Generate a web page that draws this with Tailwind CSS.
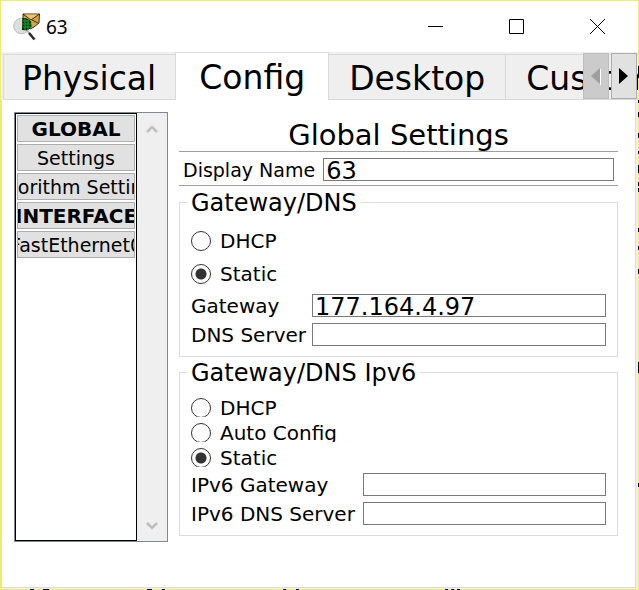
<!DOCTYPE html>
<html lang="en">
<head>
<meta charset="utf-8">
<meta name="viewport" content="width=device-width, initial-scale=1">
<title>63</title>
<script src="https://cdn.jsdelivr.net/npm/@tailwindcss/browser@4"></script>
</head>
<body class="relative min-h-screen flex flex-col overflow-hidden bg-[#f0ec72] p-px font-['DejaVu_Sans',Verdana,sans-serif] text-[19px] leading-5 text-black">
  <div class="flex grow flex-col bg-[#efefef]">
    <header class="flex h-[51px] items-center bg-white">
      <svg class="ml-3 size-7 shrink-0" viewBox="0 0 28 28" aria-hidden="true">
        <circle cx="8.500" cy="13" r="7.800" fill="#dededb" stroke="#bdbdb9"/>
        <path d="M10 1 26.500 1 26 10 21 14 17 16 10 10Z" fill="#d6a248" stroke="#2e220e" stroke-width=".9"/>
        <path d="M11 1.500H26L18 6.500Z" fill="#ecc477"/>
        <path d="M10 1 18 7 26.500 1M17 7 12 11M19 7 25 10" fill="none" stroke="#2e220e" stroke-width=".9"/>
        <path d="M9.500 5 14 5.500 18 8.500 18.500 14 14 17.500 9 17Z" fill="#052e09"/>
        <path d="M10 8H16M10 11H18M10 14H18M12 6V17M15 7V17" stroke="#14a82a" stroke-width="1"/>
        <path d="M14.500 18 16.500 20.500" stroke="#aaa" stroke-width="2"/>
        <path d="M16 20 21.500 26.500" stroke="#2b2b2b" stroke-width="2.600"/>
      </svg>
      <h1 class="ml-[5px] grow pt-px font-['Noto_Sans',sans-serif] text-[19px]">63</h1>
      <button class="flex h-full w-[81px] shrink-0 items-center justify-center" aria-label="Minimize">
        <svg class="size-[15px]" viewBox="0 0 15 15"><path d="M0 7.5H15" stroke="#000"/></svg>
      </button>
      <button class="flex h-full w-[81px] shrink-0 items-center justify-center" aria-label="Maximize">
        <svg class="size-[15px]" viewBox="0 0 15 15"><path d="M.5 .5H14.5V14.5H.5Z" fill="none" stroke="#000"/></svg>
      </button>
      <button class="flex h-full w-[81px] shrink-0 items-center justify-center" aria-label="Close">
        <svg class="size-[15px]" viewBox="0 0 15 15"><path d="M0 0 15 15M15 0 0 15" stroke="#000"/></svg>
      </button>
    </header>

    <nav class="relative flex h-12 items-end overflow-hidden pl-[2px] text-[33px] whitespace-nowrap" role="tablist" aria-label="Device">
      <button class="h-[46px] shrink-0 border border-r-0 border-[#d9d9d9] pt-[3px] pr-[19px] pl-[18px]" role="tab">Physical</button>
      <button class="h-12 shrink-0 border border-b-0 border-[#d9d9d9] bg-white px-[23px] pt-[2px]" role="tab" aria-selected="true">Config</button>
      <button class="h-[46px] shrink-0 border border-l-0 border-[#d9d9d9] px-5 pt-[3px]" role="tab">Desktop</button>
      <button class="h-[46px] shrink-0 border border-l-0 border-[#d9d9d9] px-5 pt-[3px]" role="tab">Custom Interface</button>
      <div class="absolute top-px right-[1px] flex gap-[2px]">
        <button class="flex h-[46px] w-[26px] items-center justify-center border border-[#bdbdbd] bg-[#cbcbcb]" aria-label="Scroll tabs left" disabled>
          <svg class="h-[18px] w-[10px]" viewBox="0 0 10 18"><path d="M9.500 2V18" stroke="#fff"/><path d="M0 9 9 1V17Z" fill="#9f9f9f"/></svg>
        </button>
        <button class="flex h-[46px] w-[26px] items-center justify-center border border-[#adadad] bg-[#e1e1e1]" aria-label="Scroll tabs right">
          <svg class="h-[18px] w-[10px]" viewBox="0 0 10 18"><path d="M0 1 9 9 0 17Z"/></svg>
        </button>
      </div>
    </nav>

    <main class="mr-[2px] mb-px flex grow items-start border-r border-b border-l border-[#dcdcdc] bg-white pt-3 pr-[17px] pb-[45px] pl-3">
      <div class="flex grow">
        <aside class="flex w-[154px] shrink-0 border border-[#828790] bg-[#efefef]">
          <div class="flex w-[122px] flex-col gap-[2px] border border-black bg-white p-px">
            <button class="flex h-[27px] items-center justify-center overflow-hidden border border-[#adadad] bg-[#e1e1e1] text-[20px] font-bold whitespace-nowrap"><span class="shrink-0">GLOBAL</span></button>
            <button class="flex h-[27px] items-center justify-center overflow-hidden border border-[#adadad] bg-[#e1e1e1] whitespace-nowrap"><span class="shrink-0">Settings</span></button>
            <button class="flex h-[27px] items-center justify-center overflow-hidden border border-[#adadad] bg-[#e1e1e1] whitespace-nowrap"><span class="shrink-0">Algorithm Settings</span></button>
            <button class="flex h-[27px] items-center justify-center overflow-hidden border border-[#adadad] bg-[#e1e1e1] text-[20px] font-bold whitespace-nowrap"><span class="shrink-0">INTERFACE</span></button>
            <button class="flex h-[27px] items-center justify-center overflow-hidden border border-[#adadad] bg-[#e1e1e1] whitespace-nowrap"><span class="shrink-0">FastEthernet0</span></button>
          </div>
          <div class="flex grow flex-col items-center justify-between pt-[11px] pb-[10px]">
            <button aria-label="Scroll up"><svg class="h-[10px] w-3" viewBox="0 0 12 10"><path d="M1 8 6 3 11 8" fill="none" stroke="#bfbfbf" stroke-width="2.600"/></svg></button>
            <button aria-label="Scroll down"><svg class="h-[10px] w-3" viewBox="0 0 12 10"><path d="M1 2 6 7 11 2" fill="none" stroke="#bfbfbf" stroke-width="2.600"/></svg></button>
          </div>
        </aside>

        <form class="ml-[11px] min-w-0 grow pb-[6px]">
          <h2 class="pt-[7px] text-center text-[29px] leading-8">Global Settings</h2>
          <div class="flex items-center gap-2 border-y border-[#a0a0a0] pt-[6px] pr-1 pb-1 pl-1">
            <label for="display-name" class="shrink-0">Display Name</label>
            <input id="display-name" type="text" value="63" class="h-[23px] min-w-0 grow border border-[#7a7a7a] px-[2px] pt-[2px] text-[24px] outline-none">
          </div>

          <fieldset class="mt-px border border-[#dcdcdc] pr-[11px] pb-[10px] pl-[7px]">
            <legend class="px-1 pt-[2px] text-[24px] leading-7">Gateway/DNS</legend>
            <div class="pt-[14px] pl-1 text-[20px]">
              <div class="mb-[10px] flex flex-col gap-[13px]">
                <label class="flex items-center gap-[9px]"><input type="radio" name="v4" class="size-5 shrink-0 appearance-none rounded-full border border-[#333] bg-white checked:bg-[radial-gradient(circle,#333_5px,#fff_6px)]">DHCP</label>
                <label class="flex items-center gap-[9px]"><input type="radio" name="v4" checked class="size-5 shrink-0 appearance-none rounded-full border border-[#333] bg-white checked:bg-[radial-gradient(circle,#333_5px,#fff_6px)]">Static</label>
              </div>
              <div class="grid grid-cols-[117px_1fr] items-center gap-x-1 gap-y-[6px]">
                <label for="gateway">Gateway</label>
                <input id="gateway" type="text" value="177.164.4.97" class="h-[23px] min-w-0 border border-[#7a7a7a] px-[2px] pt-[2px] text-[24px] outline-none">
                <label for="dns">DNS Server</label>
                <input id="dns" type="text" class="h-[23px] min-w-0 border border-[#7a7a7a] px-[2px] text-[24px] outline-none">
              </div>
            </div>
          </fieldset>

          <fieldset class="border border-[#dcdcdc] pr-[11px] pb-[10px] pl-[7px]">
            <legend class="px-1 pt-[2px] text-[24px] leading-7">Gateway/DNS Ipv6</legend>
            <div class="pt-[11px] pl-1 text-[20px]">
              <div class="mb-[6px] flex flex-col gap-[6px]">
                <label class="flex h-[19px] items-start gap-[9px] overflow-hidden"><input type="radio" name="v6" class="size-5 shrink-0 appearance-none rounded-full border border-[#333] bg-white checked:bg-[radial-gradient(circle,#333_5px,#fff_6px)]">DHCP</label>
                <label class="flex h-[19px] items-start gap-[9px] overflow-hidden"><input type="radio" name="v6" class="size-5 shrink-0 appearance-none rounded-full border border-[#333] bg-white checked:bg-[radial-gradient(circle,#333_5px,#fff_6px)]">Auto Config</label>
                <label class="flex h-[19px] items-start gap-[9px] overflow-hidden"><input type="radio" name="v6" checked class="size-5 shrink-0 appearance-none rounded-full border border-[#333] bg-white checked:bg-[radial-gradient(circle,#333_5px,#fff_6px)]">Static</label>
              </div>
              <div class="grid grid-cols-[168px_1fr] items-center gap-x-1 gap-y-[6px]">
                <label for="gateway6">IPv6 Gateway</label>
                <input id="gateway6" type="text" class="h-[23px] min-w-0 border border-[#7a7a7a] px-[2px] text-[24px] outline-none">
                <label for="dns6">IPv6 DNS Server</label>
                <input id="dns6" type="text" class="h-[23px] min-w-0 border border-[#7a7a7a] px-[2px] text-[24px] outline-none">
              </div>
            </div>
          </fieldset>
        </form>
      </div>
    </main>
  </div>

  <!-- slivers of the page behind the window -->
  <svg class="absolute top-0 right-0 h-[590px] w-px" viewBox="0 0 1 590" aria-hidden="true"><path d="M.5 66V78M.5 100V103M.5 112V117M.5 133V138M.5 151V154M.5 165V173M.5 182V186M.5 188V192M.5 228V232M.5 246V250M.5 269V274M.5 362V373M.5 483V487" stroke="#000"/></svg>
  <svg class="absolute bottom-0 left-0 h-px w-[639px]" viewBox="0 0 639 1" aria-hidden="true"><path d="M30 .5H34M43 .5H49M147 .5H152M162 .5H165M283 .5H286M296 .5H299M445 .5H448M451 .5H454M457 .5H460" stroke="#000"/></svg>
</body>
</html>
